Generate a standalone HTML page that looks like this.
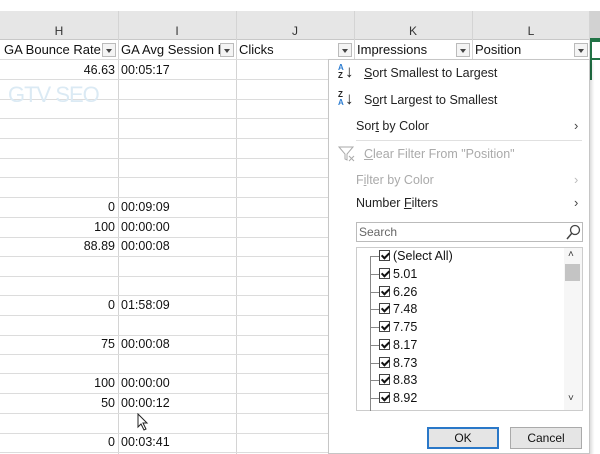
<!DOCTYPE html>
<html><head><meta charset="utf-8"><style>
*{margin:0;padding:0;box-sizing:border-box}
body{width:600px;height:454px;overflow:hidden;background:#fff;font-family:"Liberation Sans",sans-serif;font-size:12.5px;color:#222;position:relative}
.a{position:absolute}
.hdr{top:11px;height:29px;background:#e6e6e6;border-bottom:1px solid #c8c8c8}
.vl{position:absolute;width:1px;background:#d4d4d4}
.hl{position:absolute;height:1px;background:#dcdcdc;left:0;width:590px}
.col{position:absolute;top:24px;font-size:12px;color:#333;text-align:center}
.fc{position:absolute;top:42px;font-size:13px;color:#111}
.dd{position:absolute;top:43px;width:14px;height:14px;border:1px solid #bbb;background:#f4f4f4}
.dd:after{content:"";position:absolute;left:3px;top:5px;border-left:3.5px solid transparent;border-right:3.5px solid transparent;border-top:4px solid #444}
.n{position:absolute;font-size:12.5px;color:#111}
.mi{position:absolute;left:356px;font-size:12.5px;color:#222}
.dis{color:#aaa}
.arr{position:absolute;left:574px;font-size:13px;color:#444}
.it{position:absolute;left:379px;font-size:12.5px;color:#111}
.cb{display:inline-block;width:11px;height:11px;border:1px solid #444;margin-right:3px;vertical-align:-1px;position:relative;background:#fff}
.cb:after{content:"";position:absolute;left:3px;top:0px;width:3px;height:6px;border:solid #111;border-width:0 2px 2px 0;transform:rotate(45deg)}
.tk{position:absolute;left:370px;width:9px;height:1px;background:#888}
</style></head><body>
<div class="a hdr" style="left:0;width:600px"></div>
<div class="a" style="left:589px;top:11px;width:11px;height:29px;background:#d2d2d2;border-bottom:2px solid #217346"></div>
<div class="col" style="left:0;width:118px">H</div>
<div class="col" style="left:118px;width:118px">I</div>
<div class="col" style="left:236px;width:118px">J</div>
<div class="col" style="left:354px;width:118px">K</div>
<div class="col" style="left:472px;width:118px">L</div>
<div class="vl" style="left:118px;top:11px;height:443px"></div>
<div class="vl" style="left:236px;top:11px;height:443px"></div>
<div class="vl" style="left:354px;top:11px;height:48px"></div>
<div class="vl" style="left:472px;top:11px;height:48px"></div>
<div class="vl" style="left:589px;top:11px;height:443px"></div>
<div class="hl" style="top:59px"></div>
<div class="hl" style="top:79px"></div><div class="hl" style="top:99px"></div><div class="hl" style="top:118px"></div><div class="hl" style="top:138px"></div><div class="hl" style="top:158px"></div><div class="hl" style="top:177px"></div><div class="hl" style="top:197px"></div><div class="hl" style="top:217px"></div><div class="hl" style="top:237px"></div><div class="hl" style="top:256px"></div><div class="hl" style="top:276px"></div><div class="hl" style="top:295px"></div><div class="hl" style="top:315px"></div><div class="hl" style="top:335px"></div><div class="hl" style="top:354px"></div><div class="hl" style="top:373px"></div><div class="hl" style="top:393px"></div><div class="hl" style="top:413px"></div><div class="hl" style="top:433px"></div><div class="hl" style="top:452px"></div>
<div class="a" style="left:590px;top:40px;width:10px;height:20px;border:2px solid #217346;border-right:none"></div>
<div class="a" style="left:590px;top:60px;width:2px;height:20px;background:#217346"></div>
<div class="fc" style="left:4px">GA Bounce Rate</div><div class="dd" style="left:102px"></div>
<div class="fc" style="left:121px">GA Avg Session D</div><div class="dd" style="left:220px"></div>
<div class="fc" style="left:239px">Clicks</div><div class="dd" style="left:338px"></div>
<div class="fc" style="left:357px">Impressions</div><div class="dd" style="left:456px"></div>
<div class="fc" style="left:475px">Position</div><div class="dd" style="left:574px"></div>
<div class="n" style="right:485px;top:63px">46.63</div><div class="n" style="left:121px;top:63px">00:05:17</div>
<div class="n" style="right:485px;top:200px">0</div><div class="n" style="left:121px;top:200px">00:09:09</div>
<div class="n" style="right:485px;top:220px">100</div><div class="n" style="left:121px;top:220px">00:00:00</div>
<div class="n" style="right:485px;top:239px">88.89</div><div class="n" style="left:121px;top:239px">00:00:08</div>
<div class="n" style="right:485px;top:298px">0</div><div class="n" style="left:121px;top:298px">01:58:09</div>
<div class="n" style="right:485px;top:337px">75</div><div class="n" style="left:121px;top:337px">00:00:08</div>
<div class="n" style="right:485px;top:376px">100</div><div class="n" style="left:121px;top:376px">00:00:00</div>
<div class="n" style="right:485px;top:396px">50</div><div class="n" style="left:121px;top:396px">00:00:12</div>
<div class="n" style="right:485px;top:435px">0</div><div class="n" style="left:121px;top:435px">00:03:41</div>
<div class="a" style="left:8px;top:82px;font-size:22px;color:#dbeaf4;letter-spacing:-1px">GTV SEO</div>
<svg class="a" style="left:137px;top:413px" width="12" height="18"><path d="M1 1 L1 14 L4 11 L7 17 L9 16 L6 10 L10 10 Z" fill="#fff" stroke="#222" stroke-width="1"/></svg>
<div class="a" style="left:328px;top:59px;width:262px;height:395px;background:#fff;border:1px solid #c6c6c6;box-shadow:2px 2px 3px rgba(0,0,0,.15)"></div>
<div class="a" style="left:338px;top:64px;font-size:8px;line-height:8px;color:#2a7bd0;font-weight:bold">A<br><span style="color:#222">Z</span></div>
<div class="a" style="left:345px;top:62px;font-size:17px;color:#222">↓</div>
<div class="mi" style="left:364px;top:66px"><u>S</u>ort Smallest to Largest</div>
<div class="a" style="left:338px;top:91px;font-size:8px;line-height:8px;color:#222;font-weight:bold">Z<br><span style="color:#2a7bd0">A</span></div>
<div class="a" style="left:345px;top:89px;font-size:17px;color:#222">↓</div>
<div class="mi" style="left:364px;top:93px">S<u>o</u>rt Largest to Smallest</div>
<div class="mi" style="top:119px">Sor<u>t</u> by Color</div><div class="arr" style="top:118px">›</div>
<div class="a" style="left:356px;top:140px;width:226px;height:1px;background:#e0e0e0"></div>
<svg class="a" style="left:338px;top:146px" width="18" height="16"><path d="M1 1 H15 L9 8 V14 L7 13 V8 Z" fill="none" stroke="#aaa"/><path d="M11 10 L16 15 M16 10 L11 15" stroke="#aaa"/></svg>
<div class="mi dis" style="left:364px;top:147px"><u>C</u>lear Filter From "Position"</div>
<div class="mi dis" style="top:173px">F<u>i</u>lter by Color</div><div class="arr" style="top:172px;color:#bbb">›</div>
<div class="mi" style="top:196px">Number <u>F</u>ilters</div><div class="arr" style="top:195px">›</div>
<div class="a" style="left:356px;top:222px;width:227px;height:20px;border:1px solid #bbb"></div>
<div class="a" style="left:359px;top:225px;font-size:12px;color:#666">Search</div>
<svg class="a" style="left:566px;top:224px" width="15" height="16"><circle cx="9" cy="6" r="4.5" fill="none" stroke="#444" stroke-width="1.3"/><path d="M6 9 L1 15" stroke="#444" stroke-width="1.5"/></svg>
<div class="a" style="left:356px;top:247px;width:227px;height:164px;border:1px solid #ccc"></div>
<div class="a" style="left:370px;top:256px;width:1px;height:155px;background:#888"></div>
<div class="a" style="left:564px;top:248px;width:18px;height:162px;background:#f6f6f6"></div>
<div class="a" style="left:565px;top:264px;width:15px;height:17px;background:#c4c4c4"></div>
<div class="a" style="left:568px;top:249px;font-size:10px;color:#333">˄</div>
<div class="a" style="left:568px;top:393px;font-size:10px;color:#333">˅</div>
<div class="tk" style="top:256px"></div><div class="it" style="top:249px"><span class="cb"></span>(Select All)</div>
<div class="tk" style="top:274px"></div><div class="it" style="top:267px"><span class="cb"></span>5.01</div>
<div class="tk" style="top:292px"></div><div class="it" style="top:285px"><span class="cb"></span>6.26</div>
<div class="tk" style="top:309px"></div><div class="it" style="top:302px"><span class="cb"></span>7.48</div>
<div class="tk" style="top:327px"></div><div class="it" style="top:320px"><span class="cb"></span>7.75</div>
<div class="tk" style="top:345px"></div><div class="it" style="top:338px"><span class="cb"></span>8.17</div>
<div class="tk" style="top:363px"></div><div class="it" style="top:356px"><span class="cb"></span>8.73</div>
<div class="tk" style="top:380px"></div><div class="it" style="top:373px"><span class="cb"></span>8.83</div>
<div class="tk" style="top:398px"></div><div class="it" style="top:391px"><span class="cb"></span>8.92</div>
<div class="a" style="left:427px;top:427px;width:72px;height:22px;border:2px solid #2a78c8;background:#e5e5e5;text-align:center;font-size:12px;line-height:18px;color:#111">OK</div>
<div class="a" style="left:510px;top:427px;width:72px;height:22px;border:1px solid #aaa;background:#e5e5e5;text-align:center;font-size:12px;line-height:20px;color:#111">Cancel</div>
</body></html>
